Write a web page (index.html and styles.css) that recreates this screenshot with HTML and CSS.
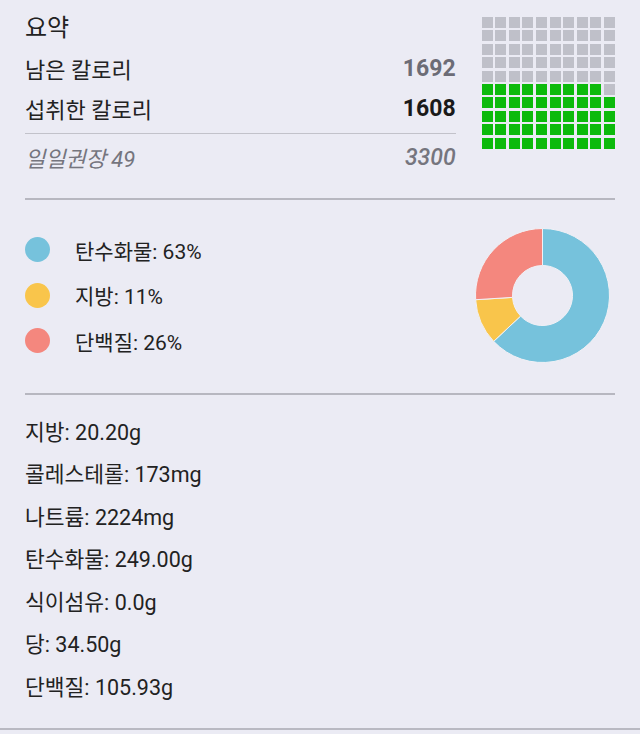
FILE: index.html
```html
<!DOCTYPE html>
<html lang="ko">
<head>
    <meta charset="UTF-8">
    <meta name="viewport" content="width=device-width, initial-scale=1.0">
    <title>요약</title>
    <link rel="stylesheet" href="styles.css">
</head>
<body>
    <section class="summary">
        <div class="summary-text">
            <h2 class="title">요약</h2>
            <div class="row">
                <span>남은 칼로리</span>
                <span class="num remain">1692</span>
            </div>
            <div class="row">
                <span>섭취한 칼로리</span>
                <span class="num eaten">1608</span>
            </div>
            <div class="row goal">
                <span>일일권장 49</span>
                <span class="num">3300</span>
            </div>
        </div>
        <div class="waffle" id="waffle">
            <!-- 100 cells, filled below -->
        </div>
    </section>

    <section class="macros">
        <ul class="legend">
            <li><span class="dot carb"></span>탄수화물: 63%</li>
            <li><span class="dot fat"></span>지방: 11%</li>
            <li><span class="dot protein"></span>단백질: 26%</li>
        </ul>
        <svg class="donut" width="135" height="135" viewBox="0 0 135 135">
            <path class="seg-carb" d="M67.5 0.5 A67 67 0 1 1 18.66 113.36 L45.63 88.04 A30 30 0 1 0 67.5 37.5 Z"/>
            <path class="seg-fat" d="M18.66 113.36 A67 67 0 0 1 0.63 71.71 L37.56 69.38 A30 30 0 0 0 45.63 88.04 Z"/>
            <path class="seg-protein" d="M0.63 71.71 A67 67 0 0 1 67.5 0.5 L67.5 37.5 A30 30 0 0 0 37.56 69.38 Z"/>
        </svg>
    </section>

    <section class="nutrients">
        <ul>
            <li>지방: 20.20g</li>
            <li>콜레스테롤: 173mg</li>
            <li>나트륨: 2224mg</li>
            <li>탄수화물: 249.00g</li>
            <li>식이섬유: 0.0g</li>
            <li>당: 34.50g</li>
            <li>단백질: 105.93g</li>
        </ul>
    </section>

    <script>
        // 49 of 100 cells are filled, bottom row first, left to right
        const waffle = document.getElementById('waffle');
        const eaten = 49;
        for (let i = 0; i < 100; i++) {
            const row = Math.floor(i / 10);
            const col = i % 10;
            const cell = document.createElement('span');
            cell.classList.add('cell');
            if ((9 - row) * 10 + col < eaten) {
                cell.classList.add('on');
            }
            waffle.appendChild(cell);
        }
    </script>
</body>
</html>
```

FILE: styles.css
```css
body {
    background-color: #ebebf4;
    color: #222;
    font-family: Roboto, "Noto Sans CJK KR", sans-serif;
    margin: 0;
    padding: 0;
}
ul {
    list-style-type: none;
    margin: 0;
    padding: 0;
}
.summary {
    display: flex;
    align-items: flex-start;
    padding: 8px 25px 0;
}
.summary-text {
    flex: 1;
    margin-right: 26px;
}
.title {
    margin: 0;
    height: 40px;
    line-height: 40px;
    font-size: 24px;
    font-weight: 400;
}
.row {
    display: flex;
    justify-content: space-between;
    align-items: center;
    height: 40px;
    font-size: 22px;
}
.row .num {
    font-size: 23px;
    font-weight: 700;
}
.row .remain {
    color: #6c6c76;
}
.row .eaten {
    color: #1a1a1a;
}
.goal {
    margin-top: 5px;
    border-top: 1px solid #c2c2ca;
    padding-top: 3px;
    color: #75757e;
    font-style: italic;
}
.goal .num {
    font-weight: 500;
}
.waffle {
    display: grid;
    grid-template-columns: repeat(10, 11px);
    grid-auto-rows: 11px;
    gap: 2.4px 2.6px;
    margin-top: 9px;
}
.cell {
    background-color: #bfc0c9;
}
.cell.on {
    background-color: #0cba0c;
}
.macros {
    display: flex;
    justify-content: space-between;
    align-items: center;
    margin: 21px 25px 0;
    padding: 27px 5px 29px 0;
    border-top: 2px solid #b7b7c0;
    border-bottom: 2px solid #b7b7c0;
}
.legend li {
    display: flex;
    align-items: center;
    height: 45.5px;
    font-size: 21px;
}
.dot {
    width: 25px;
    height: 25px;
    border-radius: 50%;
    margin-right: 25px;
}
.dot.carb {
    background-color: #76c2dc;
}
.dot.fat {
    background-color: #f9c54b;
}
.dot.protein {
    background-color: #f4877e;
}
.donut path {
    stroke: #f1f1f6;
    stroke-width: 1;
}
.seg-carb {
    fill: #76c2dc;
}
.seg-fat {
    fill: #f9c54b;
}
.seg-protein {
    fill: #f4877e;
}
.nutrients {
    padding: 17px 25px 19px;
    border-bottom: 2px solid #b9b9c2;
}
.nutrients li {
    height: 42.5px;
    line-height: 42.5px;
    font-size: 21.5px;
}
```
